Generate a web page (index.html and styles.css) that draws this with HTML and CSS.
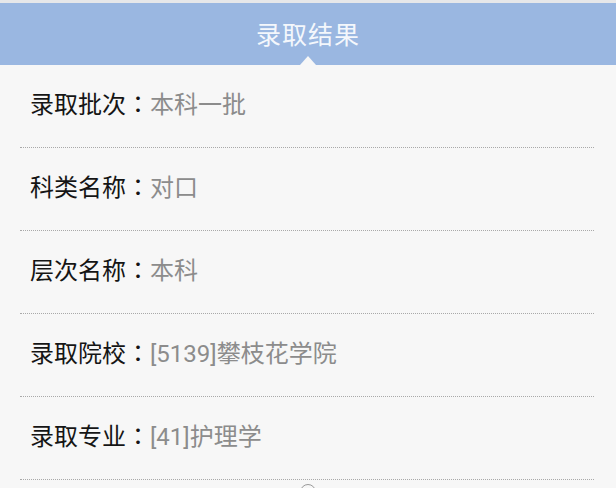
FILE: index.html
```html
<!DOCTYPE html>
<html lang="zh-CN">
<head>
    <meta charset="UTF-8">
    <meta name="viewport" content="width=device-width, initial-scale=1.0">
    <title>录取结果</title>
    <link rel="stylesheet" href="styles.css">
</head>
<body>
    <div class="page">
        <div class="header">
            <h1>录取结果</h1>
            <span class="arrow"></span>
        </div>

        <ul class="result-list">
            <li><span class="label">录取批次<span class="colon" lang="zh-TW">：</span></span><span class="value">本科一批</span></li>
            <li><span class="label">科类名称<span class="colon" lang="zh-TW">：</span></span><span class="value">对口</span></li>
            <li><span class="label">层次名称<span class="colon" lang="zh-TW">：</span></span><span class="value">本科</span></li>
            <li><span class="label">录取院校<span class="colon" lang="zh-TW">：</span></span><span class="value">[5139]攀枝花学院</span></li>
            <li><span class="label">录取专业<span class="colon" lang="zh-TW">：</span></span><span class="value">[41]护理学</span></li>
        </ul>

        <span class="scroll-dot"></span>
    </div>
</body>
</html>
```

FILE: styles.css
```css
body, html {
    margin: 0;
    padding: 0;
    font-family: Roboto, "Noto Sans CJK SC", sans-serif;
    background-color: #f7f7f7;
    height: 100%;
    overflow: hidden;
}

.page {
    position: relative;
    height: 100%;
    border-top: 3px solid #e6e7e9;
}

.header {
    position: relative;
    height: 62px;
    background-color: #9ab7e1;
    display: flex;
    justify-content: center;
    align-items: center;
}

.header h1 {
    margin: 0;
    margin-top: -2px;
    font-size: 25px;
    font-weight: normal;
    letter-spacing: 1px;
    color: #f4f7fc;
}

.header .arrow {
    position: absolute;
    left: 300px;
    bottom: 0;
    width: 0;
    height: 0;
    border-left: 8px solid transparent;
    border-right: 8px solid transparent;
    border-bottom: 9px solid #f7f7f7;
}

.result-list {
    list-style: none;
    margin: 0 22px 0 20px;
    padding: 0;
}

.result-list li {
    height: 28px;
    padding: 24px 0 30px 10px;
    line-height: 28px;
    font-size: 24px;
    border-bottom: 1px dotted #a9a9a9;
}

.result-list .label {
    color: #151515;
}

.result-list .colon {
    font-family: "Noto Sans CJK TC", sans-serif;
}

.result-list .value {
    color: #8c8c8c;
}

.scroll-dot {
    position: absolute;
    left: 300px;
    top: 481px;
    width: 14px;
    height: 14px;
    border: 1px solid #9a9a9a;
    border-radius: 50%;
}
```
